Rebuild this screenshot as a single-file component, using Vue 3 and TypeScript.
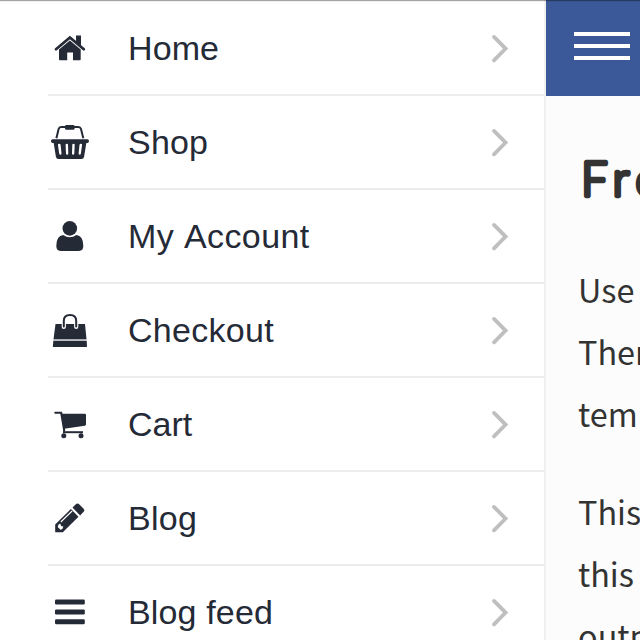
<script setup lang="ts">
interface Item { id: string; label: string; spacing: number }

const items: Item[] = [
  { id: 'home', label: 'Home', spacing: 0.1 },
  { id: 'shop', label: 'Shop', spacing: 0.2 },
  { id: 'account', label: 'My Account', spacing: 0.4 },
  { id: 'checkout', label: 'Checkout', spacing: 0.3 },
  { id: 'cart', label: 'Cart', spacing: 0 },
  { id: 'blog', label: 'Blog', spacing: 0.3 },
  { id: 'feed', label: 'Blog feed', spacing: 0.15 },
]
</script>

<template>
  <div class="screen">
    <nav class="drawer">
      <a v-for="item in items" :key="item.id" class="row">
        <svg class="icon" width="44" height="44" viewBox="0 0 44 44">
          <g v-if="item.id === 'home'">
            <path d="M8 23.2 21.9 11.5l13.9 11.7" fill="none" stroke="currentColor" stroke-width="2.8" stroke-linecap="round" stroke-linejoin="miter" />
            <path d="M28 9.5h5V20l-5-4z" />
            <path d="M21.9 14.6 32.7 23.6v9.6q0 1-1 1H25v-7.7h-5.8v7.7H12q-1 0-1-1v-9.6z" />
          </g>
          <g v-else-if="item.id === 'shop'">
            <path d="M8.4 18.3 10.6 9q.6-2 2.6-2h17.2q2 0 2.6 2l2.3 9.3" fill="none" stroke="currentColor" stroke-width="2" />
            <rect x="17" y="5" width="9.6" height="4.8" rx="1.4" />
            <path fill-rule="evenodd" d="M4.7 19.2h34.6q1.7 0 1.7 1.9t-1.7 2h-1l-2.2 13.6q-.4 2.3-2.6 2.3h-23q-2.2 0-2.6-2.3L5.7 23.1h-1q-1.7 0-1.7-2t1.7-1.9zM9.9 24.8l1.3 8.7q.3 1.3 1.4 1.2 1.1-.2.9-1.4l-.9-8.6q-.2-1-1.4-1t-1.3 1.1zM17.6 24.8l.4 8.7q.1 1.2 1.2 1.2t1.1-1.2l-.3-8.7q0-1.1-1.2-1.1t-1.2 1.1zM24.3 24.8l-.3 8.7q0 1.2 1.1 1.2t1.2-1.2l.4-8.7q0-1.1-1.2-1.1t-1.2 1.1zM31.5 24.7l-.9 8.6q-.1 1.2.9 1.4 1.1.1 1.4-1.2l1.2-8.7q0-1.1-1.2-1.1t-1.4 1z" />
          </g>
          <g v-else-if="item.id === 'account'">
            <circle cx="21.8" cy="14.4" r="7.3" />
            <path d="M15.2 21.1q6.6 4.4 13.2 0 6.9 1 6.9 10.6 0 5.2-4.3 5.2H12.6q-4.3 0-4.3-5.2 0-9.6 6.9-10.6z" />
          </g>
          <g v-else-if="item.id === 'checkout'">
            <path d="M7.5 16H37l1.5 15.3h-33z" />
            <path d="M5.3 33h33.4l.3 5.9H4.9z" />
            <path d="M5.4 32.1h33.2" stroke="#a4a5ac" stroke-width="1.5" />
            <path d="M15.8 19v-6q0-5.9 6.2-5.9t6.2 5.9v6" fill="none" stroke="#fff" stroke-width="4.2" stroke-linecap="round" />
            <path d="M15.8 18.5V13q0-5.9 6.2-5.9t6.2 5.9v5.5" fill="none" stroke="currentColor" stroke-width="2" stroke-linecap="round" />
          </g>
          <g v-else-if="item.id === 'cart'" transform="translate(0 1.7)">
            <path d="M7.3 9h5.9l3 17.7" fill="none" stroke="currentColor" stroke-width="2.1" stroke-linecap="round" />
            <path d="m13.6 10 23.2.1q1.2 0 1.2 1.2v9.6q0 1-1.2 1.2L16 25z" />
            <path d="M15 28.5h20" stroke="currentColor" stroke-width="2" />
            <path d="M16 24v4" stroke="currentColor" stroke-width="1.5" />
            <circle cx="15.8" cy="32" r="2.5" /><circle cx="33" cy="32" r="2.5" />
          </g>
          <g v-else-if="item.id === 'blog'">
            <path d="m7.2 28.5 15.7-15.4 7.6 7.7-15.7 15.4H7.2z" />
            <path d="m24.5 11.5 3.1-3q1.9-1.8 3.8 0l4 4q1.7 1.8 0 3.6l-3.3 3.3z" />
            <path d="m12.8 26 11.3-11" stroke="#fff" stroke-width="1.1" />
            <path d="m10.5 28.6 1.7-1 .9 2.4 2.2.5-.9 2.4-1.9.9-2.8-2.7z" fill="#fff" />
          </g>
          <g v-else>
            <rect x="7" y="9.5" width="29.8" height="5" rx="1.2" />
            <rect x="7" y="19.4" width="29.8" height="5" rx="1.2" />
            <rect x="7" y="29.3" width="29.8" height="5" rx="1.2" />
          </g>
        </svg>
        <span class="label" :style="{ letterSpacing: item.spacing + 'px' }">{{ item.label }}</span>
        <svg class="chevron" width="20" height="30" viewBox="0 0 20 30">
          <path d="m4 3.9 11.6 11.7L4 27.3" fill="none" stroke="#bfbfbf" stroke-width="3.8" stroke-linecap="round" />
        </svg>
      </a>
    </nav>
    <main class="page">
      <header class="bar">
        <div class="burger"><i /><i /><i /></div>
      </header>
      <article class="content">
        <h1 class="title">
          <svg width="160" height="60" viewBox="0 0 160 60">
            <text x="3.2" y="46" class="title-text">Fro</text>
          </svg>
        </h1>
        <p>Use<br>Then<br>tem</p>
        <p>This<br>this<br>outp</p>
      </article>
    </main>
    <div class="topline" />
  </div>
</template>

<style>
body { overflow: hidden; }
</style>

<style scoped>
.screen {
  position: relative;
  display: flex;
  width: 640px;
  height: 640px;
  overflow: hidden;
  background: #fff;
}
.drawer {
  flex: none;
  box-sizing: border-box;
  width: 546px;
  padding: 2px 0 0 48px;
  border-right: 2px solid #f0f0f0;
}
.row {
  display: flex;
  align-items: center;
  box-sizing: border-box;
  height: 94px;
  border-bottom: 2px solid #ededed;
  color: #252a37;
}
.icon { flex: none; fill: currentColor; }
.label {
  flex: 1;
  padding-left: 36px;
  font: 34px/40px "Liberation Sans", Arial, sans-serif;
  font-kerning: none;
  white-space: nowrap;
}
.chevron { flex: none; margin-right: 34px; }
.page {
  flex: none;
  width: 94px;
  overflow: hidden;
  background: #fcfcfc;
}
.bar {
  box-sizing: border-box;
  height: 96px;
  padding: 32px 0 0 28px;
  background: #3b5998;
}
.burger { display: grid; gap: 8px; width: 56px; }
.burger i { height: 4px; background: #fff; }
.content {
  padding: 54px 0 0 32px;
  color: #333;
  font: 32.4px/62px "Noto Sans CJK SC", "Noto Sans", sans-serif;
  white-space: nowrap;
}
.title { height: 60px; margin: 0 0 48px; }
.title svg { display: block; }
.title-text {
  font: 300 46.5px Lato, sans-serif;
  letter-spacing: 7.5px;
  fill: #333;
  stroke: #333;
  stroke-width: 4.4px;
  stroke-linejoin: round;
}
p { margin: 0 0 36px; }
.topline {
  position: absolute;
  inset: 0 0 auto;
  height: 1px;
  background: rgba(0, 0, 0, 0.36);
  box-shadow: 0 1px rgba(0, 0, 0, 0.06);
}
</style>
